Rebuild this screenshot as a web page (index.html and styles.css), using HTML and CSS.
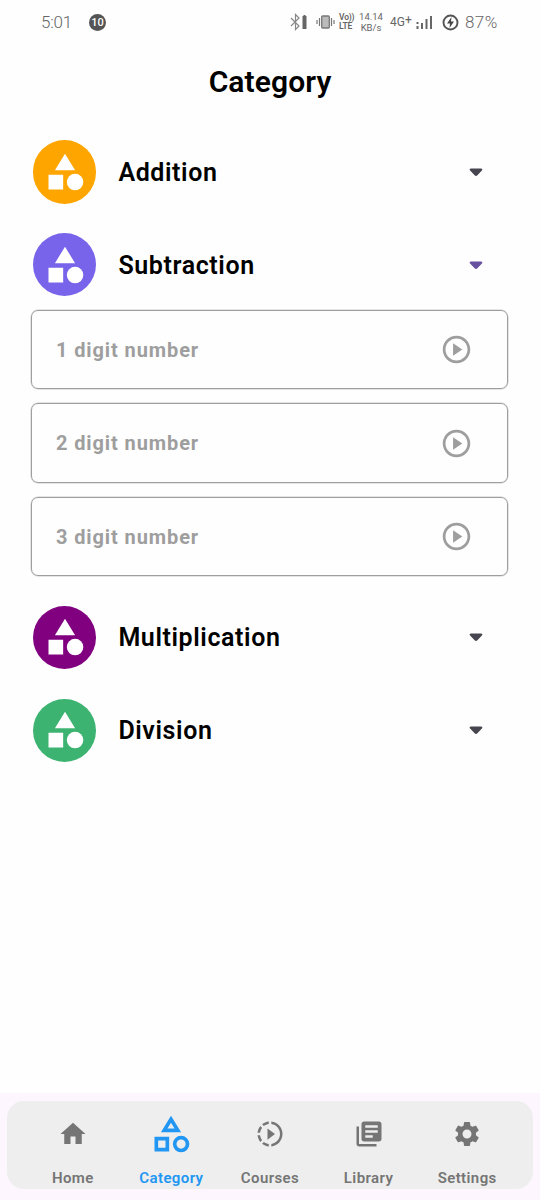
FILE: index.html
```html
<!DOCTYPE html>
<html lang="en">
<head>
<meta charset="utf-8">
<title>Category</title>
<link rel="stylesheet" href="styles.css">
</head>
<body>
<svg class="defs" width="0" height="0">
  <symbol id="shapes" viewBox="0 0 24 24"><path d="M12 2l-5.5 9h11zM3 13.5h8v8H3z"/><circle cx="17.5" cy="17.5" r="4.5"/></symbol>
  <symbol id="play" viewBox="0 0 24 24"><path d="M9.500 16.500l6.700-4.500-6.700-4.500v9zM12 2C6.48 2 2 6.48 2 12s4.48 10 10 10 10-4.48 10-10S17.52 2 12 2zm0 18c-4.41 0-8-3.59-8-8s3.59-8 8-8 8 3.59 8 8-3.59 8-8 8z"/></symbol>
  <symbol id="caret" viewBox="0 0 14 9"><path d="M2 .4h10c1.400 0 1.800 1.300.9 2.200L8.400 7.300c-.9.9-1.900.9-2.800 0L1.100 2.600C.2 1.700.6.400 2 .4z"/></symbol>
</svg>
<div class="screen">
  <header class="status">
    <span class="clock">5:01</span>
    <span class="badge">10</span>
    <svg class="bt" width="18" height="18" viewBox="0 0 18 18"><path d="M1 5l8 8-3.500 3.500v-15L9 5l-8 8" fill="none" stroke="#888" stroke-width="1.200"/><path d="M12.500 3h1V2h2v1h1v13h-4z" fill="#666"/></svg>
    <svg class="vib" width="19" height="14" viewBox="0 0 19 14"><path d="M1 5v4M3.500 3v8M15.500 3v8M18 5v4" stroke="#777" stroke-width="1.200"/><rect x="5.700" y="1" width="7.600" height="12" rx="1" fill="#bbb" stroke="#777" stroke-width="1.300"/></svg>
    <span class="stack volte"><b>Vo))</b><b>LTE</b></span>
    <span class="stack rate"><span>14.14</span><span>KB/s</span></span>
    <span class="net">4G<span class="plus">+</span></span>
    <svg class="signal" width="17" height="15" viewBox="0 0 17 15"><path d="M1.500 7v2M1.500 11v3M6 8v6M10.500 4v10M15 1v13" stroke="#666" stroke-width="2"/></svg>
    <svg class="power" width="17" height="17" viewBox="0 0 17 17"><circle cx="8.500" cy="8.500" r="7" fill="none" stroke="#555" stroke-width="1.900"/><path d="M9.500 3L5 9.500h3L7.500 14 12 7.500H9z" fill="#444"/></svg>
    <span class="battery">87%</span>
  </header>
  <h1 class="title">Category</h1>
  <main class="list">
    <div class="row"><span class="disc orange"><svg><use href="#shapes"/></svg></span><span class="name">Addition</span><svg class="caret"><use href="#caret"/></svg></div>
    <section class="group">
      <div class="row"><span class="disc violet"><svg><use href="#shapes"/></svg></span><span class="name">Subtraction</span><svg class="caret open"><use href="#caret"/></svg></div>
      <div class="items">
        <div class="item"><span>1 digit number</span><svg><use href="#play"/></svg></div>
        <div class="item"><span>2 digit number</span><svg><use href="#play"/></svg></div>
        <div class="item"><span>3 digit number</span><svg><use href="#play"/></svg></div>
      </div>
    </section>
    <div class="row"><span class="disc purple"><svg><use href="#shapes"/></svg></span><span class="name">Multiplication</span><svg class="caret"><use href="#caret"/></svg></div>
    <div class="row"><span class="disc green"><svg><use href="#shapes"/></svg></span><span class="name">Division</span><svg class="caret"><use href="#caret"/></svg></div>
  </main>
  <footer class="dock">
    <nav class="nav">
      <a class="tab"><span class="ico"><svg viewBox="0 0 24 24"><path d="M10 20v-6h4v6h5v-8h3L12 3 2 12h3v8z"/></svg></span><span>Home</span></a>
      <a class="tab active"><span class="ico"><svg viewBox="0 0 24 24"><path d="M12 2l-5.500 9h11L12 2zm0 3.840L13.930 9h-3.870L12 5.840zM17.500 13a4.500 4.500 0 1 0 0 9 4.500 4.500 0 0 0 0-9zm0 7a2.500 2.500 0 1 1 0-5 2.500 2.500 0 0 1 0 5zM3 21.500h8v-8H3v8zm2-6h4v4H5v-4z"/></svg></span><span>Category</span></a>
      <a class="tab"><span class="ico"><svg viewBox="0 0 24 24"><path d="M10 7.500v9l6-4.500zM11 4.070V2.050c-2.010.2-3.840 1-5.320 2.210L7.100 5.690c1.110-.86 2.440-1.440 3.900-1.620zM5.690 7.100L4.260 5.680C3.050 7.160 2.250 8.990 2.050 11h2.020c.18-1.460.76-2.790 1.620-3.900zM4.070 13H2.050c.2 2.010 1 3.840 2.210 5.320l1.430-1.430c-.86-1.100-1.440-2.430-1.620-3.890zm1.610 6.740C7.160 20.950 9 21.750 11 21.950v-2.020c-1.460-.18-2.790-.76-3.900-1.620l-1.420 1.430zM22 12c0 5.160-3.920 9.420-8.950 9.950v-2.020C16.970 19.410 20 16.050 20 12s-3.030-7.410-6.950-7.930V2.050C18.080 2.580 22 6.840 22 12z"/></svg></span><span>Courses</span></a>
      <a class="tab"><span class="ico"><svg viewBox="0 0 24 24"><path d="M4 6H2v14c0 1.100.9 2 2 2h14v-2H4V6zm16-4H8c-1.100 0-2 .9-2 2v12c0 1.100.9 2 2 2h12c1.100 0 2-.9 2-2V4c0-1.100-.9-2-2-2zm-1 9H9V9h10v2zm-4 4H9v-2h6v2zm4-8H9V5h10v2z"/></svg></span><span>Library</span></a>
      <a class="tab"><span class="ico"><svg viewBox="0 0 24 24"><path d="M19.140 12.940c.04-.3.06-.61.06-.94 0-.32-.02-.64-.07-.94l2.030-1.580c.18-.14.23-.41.12-.61l-1.920-3.320c-.12-.22-.37-.29-.59-.22l-2.390.96c-.5-.38-1.030-.7-1.620-.94l-.36-2.540c-.04-.24-.24-.41-.48-.41h-3.840c-.24 0-.43.17-.47.41l-.36 2.540c-.59.24-1.130.57-1.620.94l-2.390-.96c-.22-.08-.47 0-.59.22L2.740 8.870c-.12.21-.08.47.12.61l2.030 1.580c-.05.3-.09.63-.09.94s.02.64.07.94l-2.030 1.580c-.18.14-.23.41-.12.61l1.920 3.320c.12.22.37.29.59.22l2.390-.96c.5.38 1.030.7 1.620.94l.36 2.540c.05.24.24.41.48.41h3.840c.24 0 .44-.17.47-.41l.36-2.540c.59-.24 1.130-.56 1.620-.94l2.390.96c.22.08.47 0 .59-.22l1.920-3.320c.12-.22.07-.47-.12-.61l-2.010-1.580zM12 15.600c-1.980 0-3.600-1.620-3.600-3.600s1.620-3.600 3.600-3.600 3.600 1.620 3.600 3.600-1.620 3.600-3.600 3.600z"/></svg></span><span>Settings</span></a>
    </nav>
  </footer>
</div>
</body>
</html>
```
FILE: styles.css
```css
* { box-sizing: border-box; }
body { margin: 0; background: #fefefe; font-family: Roboto, sans-serif; color: #000; }
.defs { display: block; }
.screen { display: flex; flex-direction: column; width: 540px; height: 1200px; }
.status { display: flex; align-items: center; height: 44px; padding-left: 41px; color: #666; }
.status > * { flex: none; }
.clock { width: 48px; font-size: 17px; font-weight: 300; letter-spacing: -.2px; }
.badge { width: 17px; height: 17px; border-radius: 50%; background: #555; color: #fff; font: 500 11px/17px Roboto, sans-serif; text-align: center; }
.bt { margin-left: 184px; }
.vib { margin-left: 8px; }
.stack { display: flex; flex-direction: column; }
.volte { width: 16px; margin-left: 4px; font-size: 8.500px; line-height: 9px; letter-spacing: -.2px; }
.volte b { font-weight: 600; }
.rate { width: 24px; margin-left: 4px; font-size: 9.500px; line-height: 11px; align-items: center; }
.net { display: flex; width: 23px; margin-left: 7px; font-size: 12px; }
.plus { font-size: 12px; margin-top: -2px; }
.signal { margin-left: 3px; }
.power { margin-left: 9px; }
.battery { margin-left: 6px; font-size: 17px; font-weight: 300; letter-spacing: .4px; }
.title { margin: 0; height: 76px; font-size: 30px; line-height: 76px; font-weight: 600; letter-spacing: .1px; text-align: center; }
.list { display: flex; flex-direction: column; flex: 1; padding: 20px 32px 0 31.400px; gap: 29.400px; }
.row { display: flex; align-items: center; height: 63.500px; padding: 0 25.500px 0 1.500px; }
.disc { display: grid; place-items: center; width: 63.500px; height: 63.500px; border-radius: 50%; }
.disc svg { width: 44px; height: 44px; fill: #fff; }
.orange { background: #ffa500; }
.violet { background: #7864ea; }
.purple { background: #800080; }
.green { background: #3cb371; }
.name { flex: 1; padding: 1px 0 0 22px; font-size: 25px; font-weight: 600; letter-spacing: .6px; }
.caret { width: 14px; height: 9px; margin-top: 1px; fill: #47454f; }
.caret.open { fill: #67509f; }
.items { display: flex; flex-direction: column; gap: 14px; padding-top: 13.400px; }
.item { display: flex; align-items: center; justify-content: space-between; height: 79.500px; padding: 0 34px 0 23.500px; border: 1px solid #9e9e9e; border-radius: 7px; box-shadow: 0 0 0 .5px rgba(158, 158, 158, .5); color: #9e9e9e; font-size: 20px; font-weight: 700; letter-spacing: .9px; }
.item svg { width: 33px; height: 33px; fill: #9e9e9e; }
.dock { height: 107px; padding: 8px 7px 11px; background: #fdf6ff; }
.nav { display: flex; height: 88px; padding: 0 16.500px; border-radius: 17px; background: #eee; }
.tab { display: flex; flex: 1 1 0; flex-direction: column; align-items: center; color: #757575; font-size: 15px; line-height: 18px; font-weight: 600; letter-spacing: .4px; }
.ico { display: grid; place-items: center; height: 66px; margin-bottom: 2px; }
.ico svg { width: 30px; height: 30px; fill: currentColor; }
.active { color: #2196f3; }
.active .ico svg { width: 44px; height: 44px; }
```
